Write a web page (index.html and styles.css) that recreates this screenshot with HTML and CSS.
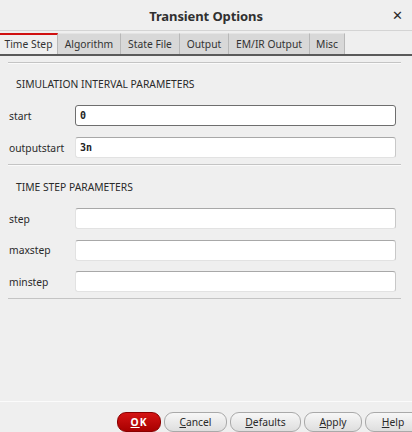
FILE: index.html
```html
<!DOCTYPE html>
<html>
<head>
<meta charset="utf-8">
<link rel="stylesheet" href="styles.css">
</head>
<body>
<div class="dialog">
  <header class="titlebar">
    <span></span>
    <h1 class="title">Transient Options</h1>
    <span class="close">✕</span>
  </header>
  <nav class="tabs">
    <div class="tab active">Time Step</div>
    <div class="tab">Algorithm</div>
    <div class="tab">State File</div>
    <div class="tab">Output</div>
    <div class="tab">EM/IR Output</div>
    <div class="tab">Misc</div>
  </nav>
  <main class="page">
    <section class="group group-a">
      <h2 class="group-title">SIMULATION INTERVAL PARAMETERS</h2>
      <div class="rows">
        <label class="row"><span class="lbl">start</span><span class="field focused">0</span></label>
        <label class="row"><span class="lbl">outputstart</span><span class="field">3n</span></label>
      </div>
    </section>
    <section class="group group-b">
      <h2 class="group-title">TIME STEP PARAMETERS</h2>
      <div class="rows">
        <label class="row"><span class="lbl">step</span><span class="field"></span></label>
        <label class="row"><span class="lbl">maxstep</span><span class="field"></span></label>
        <label class="row"><span class="lbl">minstep</span><span class="field"></span></label>
      </div>
    </section>
    <div class="rule"></div>
  </main>
  <footer class="buttons">
    <button class="btn btn-ok"><u>O</u>K</button>
    <button class="btn btn-cancel"><u>C</u>ancel</button>
    <button class="btn btn-defaults"><u>D</u>efaults</button>
    <button class="btn btn-apply"><u>A</u>pply</button>
    <button class="btn btn-help"><u>H</u>elp</button>
  </footer>
</div>
</body>
</html>
```

FILE: styles.css
```css
html, body {
  margin: 0;
  padding: 0;
  width: 412px;
  height: 432px;
  overflow: hidden;
  background: #efefef;
  font-family: "Noto Sans", "Open Sans", sans-serif;
  font-size: 10.3px;
  color: #2a2a2a;
}

.dialog {
  display: flex;
  flex-direction: column;
  height: 432px;
}

.titlebar {
  height: 31px;
  display: grid;
  grid-template-columns: 1fr auto 1fr;
  align-items: center;
  border-bottom: 1px solid #d4d4d4;
  box-sizing: border-box;
}

.title {
  margin: 0;
  font-size: 13px;
  font-weight: bold;
  color: #303030;
  padding-top: 1px;
  letter-spacing: -0.1px;
}

.close {
  justify-self: end;
  margin-right: 9px;
  font-size: 13px;
  font-weight: bold;
  color: #2a2a2a;
  font-family: "DejaVu Sans", sans-serif;
}

.tabs {
  display: flex;
  margin-top: 2px;
  height: 23px;
  box-sizing: border-box;
  border-bottom: 2px solid #5a5a5a;
}

.tab {
  height: 21px;
  line-height: 20px;
  box-sizing: border-box;
  background: #d8d8d8;
  border-top: 1px solid #e4e4e4;
  border-right: 1px solid #b8b8b8;
  color: #333;
  white-space: nowrap;
  text-align: center;
}

.tab.active {
  background: #efefef;
  border-top: 2px solid #d01010;
  line-height: 19px;
  width: 58px;
}

.tab:nth-child(2) { width: 63px; }
.tab:nth-child(3) { width: 59px; }
.tab:nth-child(4) { width: 49px; }
.tab:nth-child(5) { width: 81px; }
.tab:nth-child(6) { width: 35px; }

.page {
  flex: 1;
  padding: 6px 11px 0 8px;
  display: flex;
  flex-direction: column;
}

.group {
  border-top: 1px solid #c4c4c4;
  box-shadow: inset 0 1px 0 #fafafa;
  padding-top: 1px;
}

.group-title {
  margin: 12px 0 13px 8px;
  font-size: 10.3px;
  font-weight: normal;
  line-height: 16px;
  color: #2a2a2a;
}

.group-a { padding-bottom: 6px; }
.group-a .rows { gap: 11px; }

.group-b .group-title { margin-top: 13px; }
.group-b { padding-bottom: 6px; }
.group-b .rows { gap: 10.5px; }

.rows {
  display: flex;
  flex-direction: column;
}

.row {
  display: flex;
  align-items: center;
  height: 21px;
  padding-right: 5px;
}

.lbl {
  width: 66px;
  padding-left: 1px;
  color: #2a2a2a;
}

.field {
  flex: 1;
  height: 21px;
  box-sizing: border-box;
  background: #fff;
  border: 1px solid #e2e2e2;
  border-top-color: #a8a8a8;
  border-right-color: #c8c8c8;
  border-radius: 3px;
  font-family: "DejaVu Sans Mono", monospace;
  font-weight: bold;
  font-size: 10px;
  line-height: 19px;
  padding-left: 4px;
  color: #222;
}

.field.focused {
  border: 1px solid #6e6e6e;
}

.rule {
  border-top: 1px solid #c4c4c4;
  height: 0;
}

.buttons {
  height: 31px;
  box-sizing: border-box;
  border-top: 1px solid #fbfbfb;
  padding: 10px 0 0 117px;
  display: flex;
  gap: 3px;
}

.btn {
  flex: none;
  height: 20px;
  border-radius: 9px;
  border: 1px solid #a9a9a9;
  background: linear-gradient(#f7f7f7, #dedede);
  font-family: "Noto Sans", "Open Sans", sans-serif;
  font-size: 10.3px;
  color: #2a2a2a;
  padding: 0;
  line-height: 18px;
}

.btn-ok {
  width: 44px;
  background: linear-gradient(#d41414, #a80000);
  border-color: #8a0000;
  color: #fff;
  font-weight: bold;
  letter-spacing: 1px;
}

.btn-cancel { width: 63px; }
.btn-defaults { width: 71px; }
.btn-apply { width: 58px; }
.btn-help { width: 56px; }
```
